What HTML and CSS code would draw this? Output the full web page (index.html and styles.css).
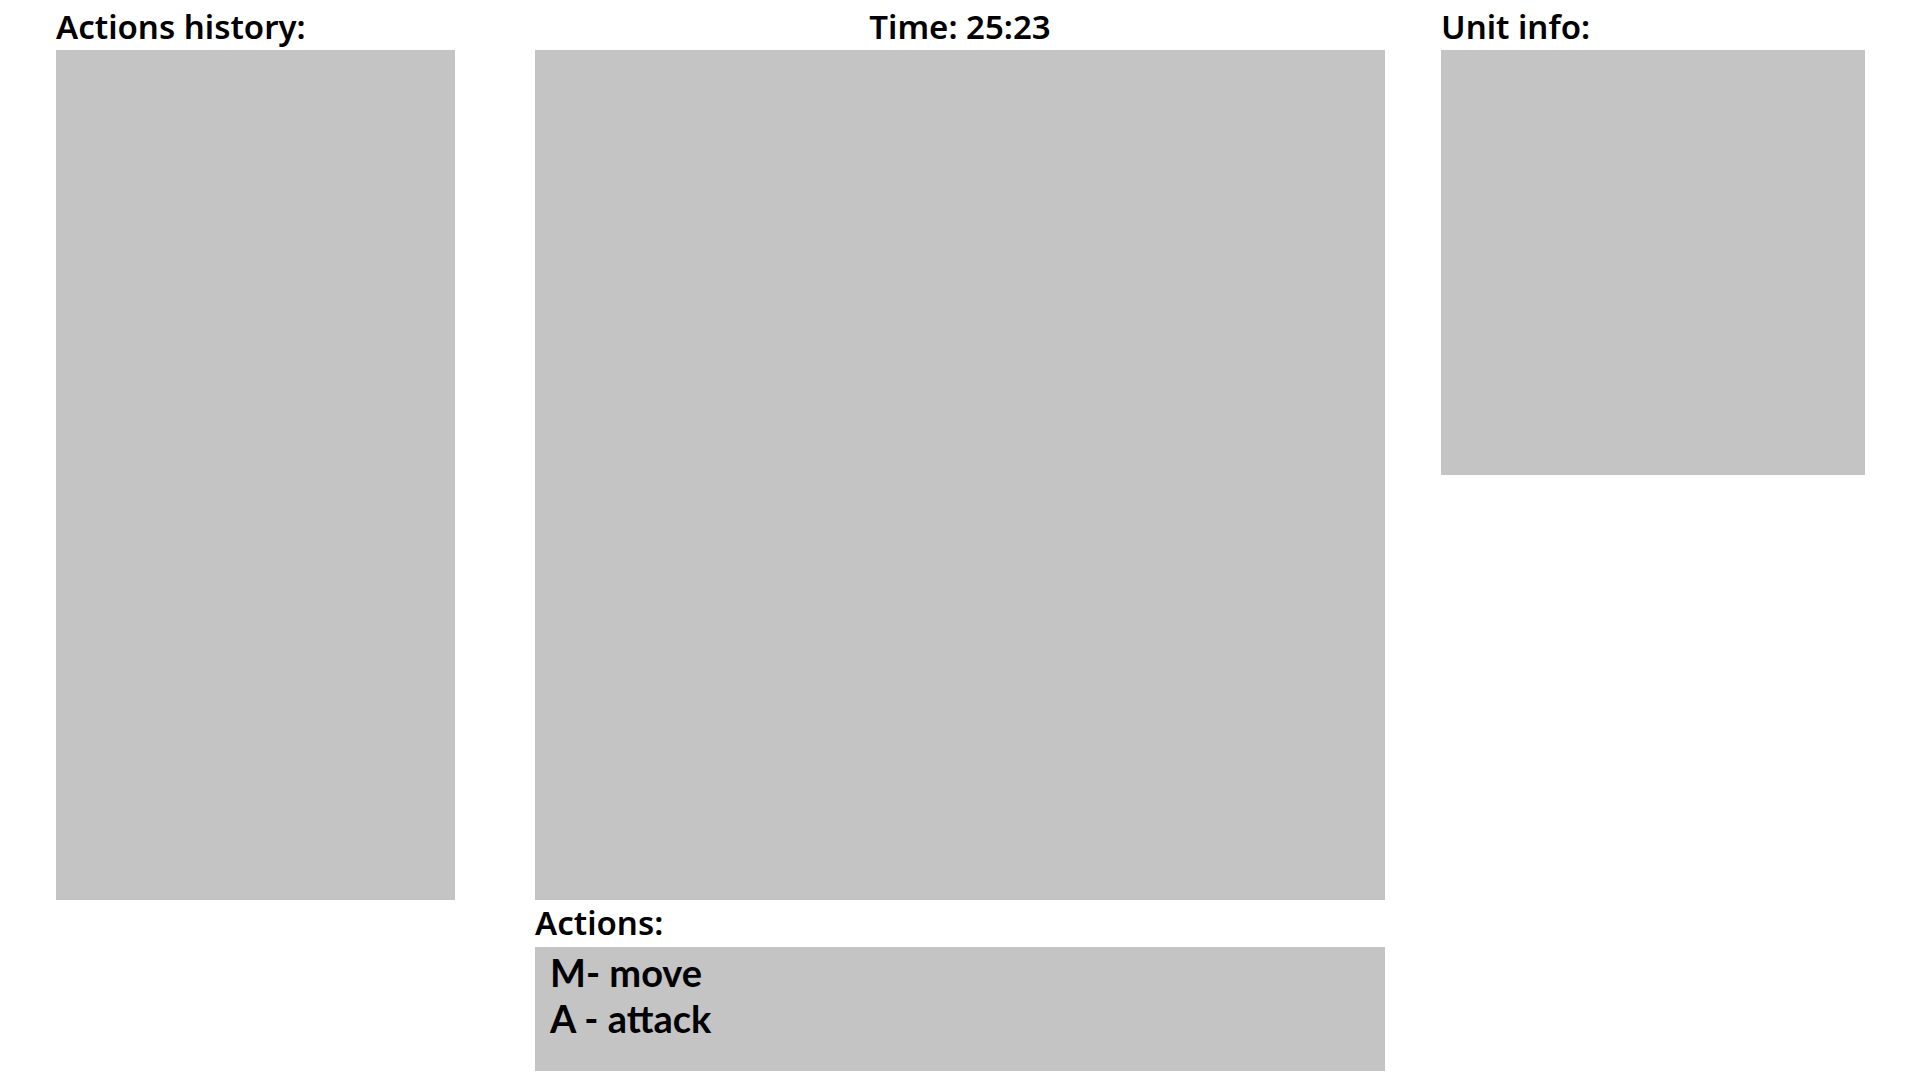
FILE: index.html
```html
<!DOCTYPE html>
<html lang="en">
<head>
    <meta charset="UTF-8">
    <title>Game</title>
    <link rel="stylesheet" href="styles.css">
</head>
<body>
    <div id="game">
        <div class="column" id="history">
            <div class="label">Actions history:</div>
            <div class="panel" id="history-list"></div>
        </div>
        <div class="column" id="middle">
            <div class="label" id="timer">Time: 25:23</div>
            <div class="panel" id="board"></div>
            <div class="label small">Actions:</div>
            <div class="panel" id="actions">
                <div>M- move</div>
                <div>A - attack</div>
            </div>
        </div>
        <div class="column" id="unit">
            <div class="label">Unit info:</div>
            <div class="panel" id="unit-info"></div>
        </div>
    </div>
</body>
</html>
```

FILE: styles.css
```css
body {
    margin: 0;
    background: #fff;
    color: #000;
    font-family: "Noto Sans", "DejaVu Sans", sans-serif;
}

#game {
    display: flex;
    padding-left: 56px;
}

.column {
    display: flex;
    flex-direction: column;
}

.label {
    height: 50px;
    box-sizing: border-box;
    padding-top: 5px;
    line-height: 44px;
    font-size: 33px;
    font-weight: 600;
    white-space: nowrap;
}
.label.small {
    height: 47px;
    padding-top: 1px;
    line-height: 44px;
}

.panel {
    background: #c4c4c4;
}

#history {
    width: 399px;
}
#history-list {
    height: 850px;
}

#middle {
    width: 850px;
    margin-left: 80px;
}
#timer {
    text-align: center;
}
#board {
    height: 850px;
}
#actions {
    height: 124px;
    box-sizing: border-box;
    padding: 2px 15px 0;
    font-family: Lato, "Noto Sans", sans-serif;
    font-size: 38px;
    line-height: 46px;
    font-weight: 700;
}

#unit {
    width: 424px;
    margin-left: 56px;
}
#unit-info {
    height: 425px;
}
```
